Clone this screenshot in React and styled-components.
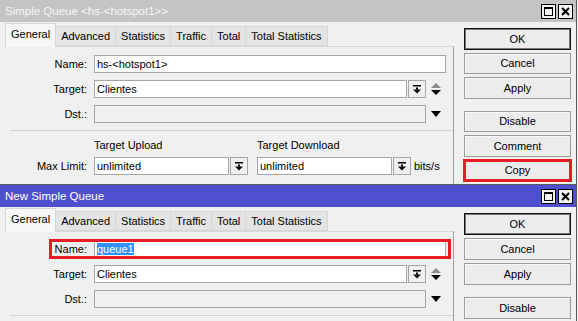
import React from 'react';
import styled, { createGlobalStyle, css } from 'styled-components';

const TABS = ['General', 'Advanced', 'Statistics', 'Traffic', 'Total', 'Total Statistics'];
const ACTIONS = [
  { label: 'OK', primary: true },
  { label: 'Cancel' },
  { label: 'Apply' },
  { label: 'Disable', spaced: true },
  { label: 'Comment' },
  { label: 'Copy' },
];

const GlobalStyle = createGlobalStyle`
  html, body {
    margin: 0;
    padding: 0;
    background: #f0f0f0;
  }
  body {
    font-family: "Liberation Sans", Arial, sans-serif;
    font-size: 11px;
    color: #000;
  }
  #root {
    width: 578px;
    height: 321px;
    overflow: hidden;
  }
`;

const Window = styled.div`
  width: 576px;
  background: #f0f0f0;
  border-right: 1px solid #5a5a5a;
  border-bottom: 1px solid #5a5a5a;
`;

const TitleBar = styled.div`
  height: 22px;
  display: flex;
  align-items: center;
  justify-content: space-between;
  padding: 0 3px 0 5px;
  box-sizing: border-box;
  background: ${p => (p.$active ? '#4f4fcf' : '#c4c4c4')};
  color: ${p => (p.$active ? '#ffffff' : '#f6f6f6')};
  font-size: 11.5px;
`;

const WinButtons = styled.div`
  display: flex;
  gap: 2px;
`;

const WinBtn = styled.div`
  width: 13px;
  height: 13px;
  border: 1px solid #000;
  background: #f2f2f2;
  display: flex;
  align-items: center;
  justify-content: center;
`;

const Body = styled.div`
  height: 162px;
  display: flex;
  padding: 1px 0 0 5px;
  box-sizing: border-box;
`;

const Left = styled.div`
  width: 449px;
  display: flex;
  flex-direction: column;
`;

const TabStrip = styled.div`
  height: 23px;
  display: flex;
  align-items: flex-end;
`;

const Tab = styled.div`
  box-sizing: border-box;
  padding: 0 5px;
  border: 1px solid #d6d6d6;
  border-left: none;
  white-space: nowrap;
  ${p => (p.$active
    ? css`
        height: 24px;
        line-height: 21px;
        margin-bottom: -1px;
        background: #f7f7f7;
        border-left: 1px solid #d6d6d6;
        border-bottom: none;
        position: relative;
        z-index: 1;
      `
    : css`
        height: 20px;
        line-height: 19px;
        background: #e4e4e4;
      `)}
`;

const Panel = styled.div`
  flex: 1;
  border-top: 1px solid #d9d9d9;
  border-right: 1px solid #a0a0a0;
  padding: 8px 7px 0 0;
`;

const Row = styled.div`
  position: relative;
  display: grid;
  grid-template-columns: 82px 1fr;
  column-gap: 7px;
  align-items: center;
  height: 18px;
  margin-bottom: 7px;
`;

const Label = styled.div`
  text-align: right;
  white-space: nowrap;
`;

const Field = styled.div`
  display: flex;
  align-items: stretch;
  height: 18px;
`;

const Input = styled.div`
  flex: 1;
  min-width: 0;
  box-sizing: border-box;
  height: 18px;
  border: 1px solid #a6a6a6;
  background: ${p => (p.$disabled ? '#f0f0f0' : '#ffffff')};
  padding: 0 2px;
  line-height: 16px;
  white-space: nowrap;
  overflow: hidden;
`;

const Selected = styled.span`
  background: #3391ff;
  color: #fff;
`;

const DropBtn = styled.div`
  width: 18px;
  margin-left: 1px;
  box-sizing: border-box;
  border: 1px solid #a6a6a6;
  background: #f0f0f0;
  display: flex;
  align-items: center;
  justify-content: center;
`;

const Slot = styled.div`
  width: 20px;
  display: flex;
  align-items: center;
  justify-content: center;
`;

const Highlight = styled.div`
  position: absolute;
  left: 44px;
  right: -5px;
  top: -1px;
  bottom: -1px;
  border: 3px solid #e81c24;
  pointer-events: none;
`;

const Separator = styled.div`
  height: 1px;
  background: #d2d2d2;
  margin: 3px -7px 7px 5px;
`;

const Heads = styled.div`
  display: grid;
  grid-template-columns: 82px 1fr;
  column-gap: 7px;
  height: 14px;
  line-height: 14px;
  margin-bottom: 5px;
`;

const Limit = styled.div`
  display: flex;
  align-items: center;
`;

const Group = styled.div`
  display: flex;
  width: 154px;
  height: 18px;
  margin-right: ${p => p.$gap}px;
  white-space: nowrap;
`;

const Actions = styled.div`
  width: 107px;
  margin-left: 10px;
  padding-top: 5px;
  display: flex;
  flex-direction: column;
`;

const ActionBtn = styled.div`
  height: 22px;
  box-sizing: border-box;
  margin-bottom: 3px;
  margin-top: ${p => (p.$spaced ? '9px' : '0')};
  border: 1px solid #9c9c9c;
  background: #ececec;
  box-shadow: inset 1px 1px 0 #fafafa;
  display: flex;
  align-items: center;
  justify-content: center;
  ${p => p.$primary && css`
    border-color: #111;
    box-shadow: inset 0 0 0 1px #7a7a7a;
  `}
  ${p => p.$marked && css`
    outline: 3px solid #e81c24;
    outline-offset: -2px;
  `}
`;

const MaxIcon = () => (
  <svg width="9" height="9" viewBox="0 0 9 9">
    <rect x="0.5" y="0.5" width="8" height="8" fill="none" stroke="#000" />
    <rect x="0" y="0" width="9" height="2" fill="#000" />
  </svg>
);

const CloseIcon = () => (
  <svg width="9" height="9" viewBox="0 0 9 9">
    <path d="M1 1 L8 8 M8 1 L1 8" stroke="#000" strokeWidth="2" />
  </svg>
);

const DropIcon = () => (
  <svg width="8" height="9" viewBox="0 0 8 9">
    <rect x="0" y="0" width="8" height="1.5" fill="#000" />
    <rect x="3" y="2.5" width="2" height="2" fill="#000" />
    <polygon points="0,4.5 8,4.5 4,8.5" fill="#000" />
  </svg>
);

const SpinIcon = () => (
  <svg width="10" height="12" viewBox="0 0 10 12">
    <polygon points="0,5 10,5 5,0" fill="#8c8c8c" />
    <polygon points="0,7 10,7 5,12" fill="#000" />
  </svg>
);

const DownIcon = () => (
  <svg width="10" height="6" viewBox="0 0 10 6">
    <polygon points="0,0 10,0 5,6" fill="#000" />
  </svg>
);

const LimitSection = () => (
  <>
    <Heads>
      <span />
      <Limit>
        <Group $gap={9}>Target Upload</Group>
        <Group $gap={3}>Target Download</Group>
      </Limit>
    </Heads>
    <Row>
      <Label>Max Limit:</Label>
      <Limit>
        <Group $gap={9}>
          <Input>unlimited</Input>
          <DropBtn><DropIcon /></DropBtn>
        </Group>
        <Group $gap={3}>
          <Input>unlimited</Input>
          <DropBtn><DropIcon /></DropBtn>
        </Group>
        <span>bits/s</span>
      </Limit>
    </Row>
  </>
);

// the lower window runs off the bottom of the screen, so only its visible part is drawn
const QueueWindow = ({ title, name, active, selectName, markName, markCopy, clipped }) => (
  <Window>
    <TitleBar $active={active}>
      <span>{title}</span>
      <WinButtons>
        <WinBtn><MaxIcon /></WinBtn>
        <WinBtn><CloseIcon /></WinBtn>
      </WinButtons>
    </TitleBar>
    <Body>
      <Left>
        <TabStrip>
          {TABS.map((t, i) => (
            <Tab key={t} $active={i === 0}>{t}</Tab>
          ))}
        </TabStrip>
        <Panel>
          <Row>
            <Label>Name:</Label>
            <Field>
              <Input>{selectName ? <Selected>{name}</Selected> : name}</Input>
            </Field>
            {markName && <Highlight />}
          </Row>
          <Row>
            <Label>Target:</Label>
            <Field>
              <Input>Clientes</Input>
              <DropBtn><DropIcon /></DropBtn>
              <Slot><SpinIcon /></Slot>
            </Field>
          </Row>
          <Row>
            <Label>Dst.:</Label>
            <Field>
              <Input $disabled />
              <Slot><DownIcon /></Slot>
            </Field>
          </Row>
          <Separator />
          {!clipped && <LimitSection />}
        </Panel>
      </Left>
      <Actions>
        {(clipped ? ACTIONS.slice(0, 4) : ACTIONS).map(a => (
          <ActionBtn
            key={a.label}
            $primary={a.primary}
            $spaced={a.spaced}
            $marked={markCopy && a.label === 'Copy'}
          >
            {a.label}
          </ActionBtn>
        ))}
      </Actions>
    </Body>
  </Window>
);

const App = () => (
  <>
    <GlobalStyle />
    <QueueWindow title="Simple Queue <hs-<hotspot1>>" name="hs-<hotspot1>" markCopy />
    <QueueWindow title="New Simple Queue" name="queue1" active selectName markName clipped />
  </>
);

export default App;
